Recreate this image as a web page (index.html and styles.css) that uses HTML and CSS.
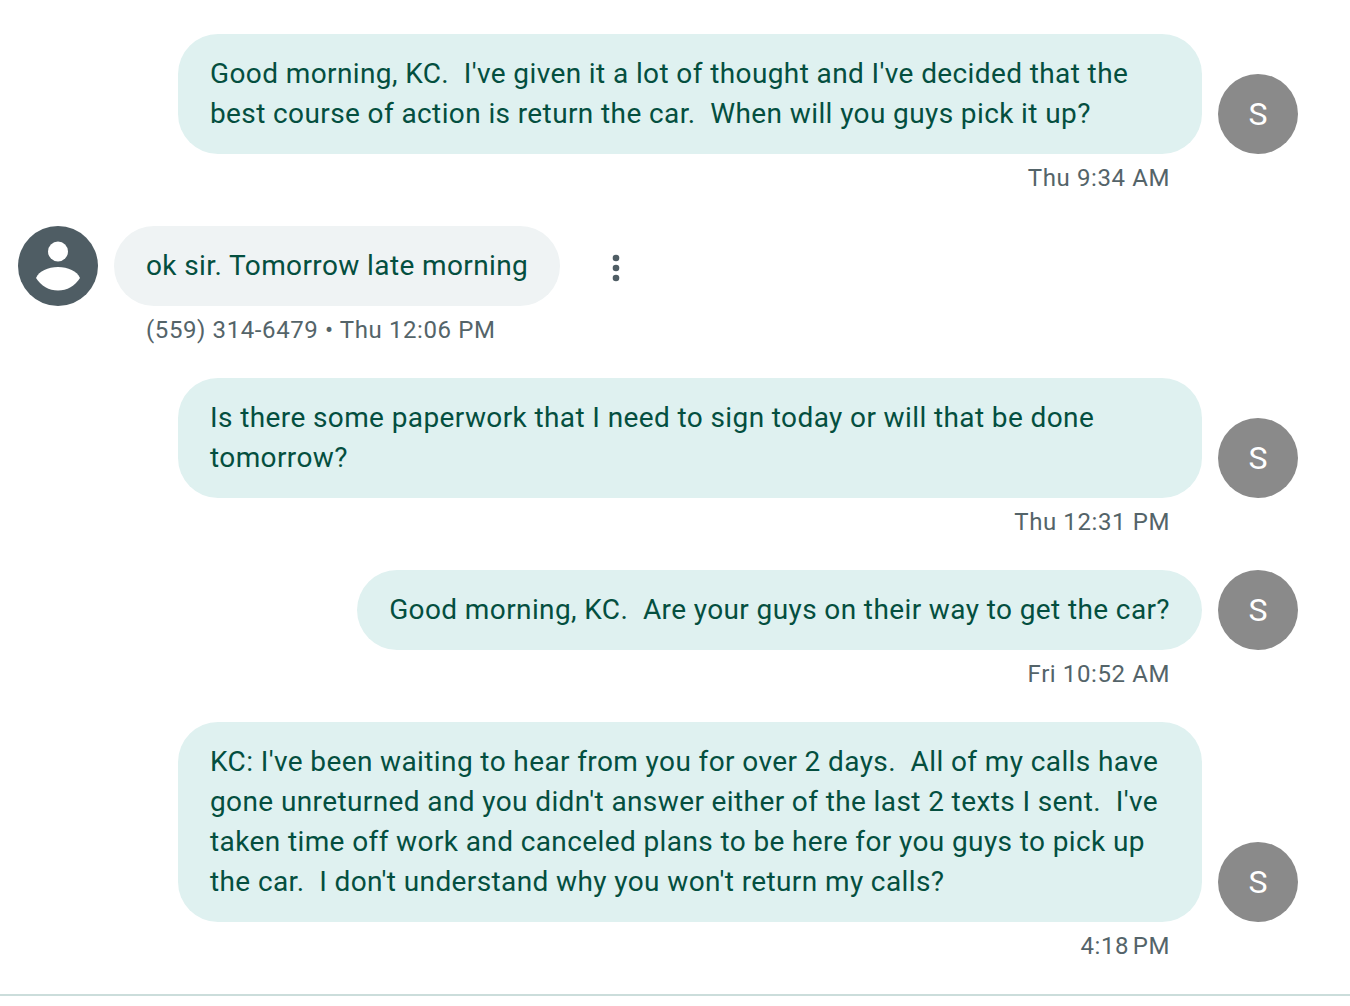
FILE: index.html
```html
<!DOCTYPE html>
<html lang="en">
<head>
    <meta charset="UTF-8">
    <meta name="viewport" content="width=device-width, initial-scale=1.0">
    <title>Messages</title>
    <link rel="stylesheet" href="styles.css">
</head>
<body>
    <main class="thread">
        <div class="message outgoing">
            <div class="row">
                <div class="bubble">Good morning, KC.  I've given it a lot of thought and I've decided that the best course of action is return the car.  When will you guys pick it up?</div>
                <div class="avatar">S</div>
            </div>
            <div class="meta">Thu 9:34 AM</div>
        </div>

        <div class="message incoming">
            <div class="row">
                <div class="avatar contact">
                    <svg viewBox="0 0 80 80" width="80" height="80">
                        <circle cx="40" cy="25.5" r="10"/>
                        <path d="M18 52C21 45 30 41 40 41s19 4 22 11C57 60 49 64.5 40 64.5S23 60 18 52z"/>
                    </svg>
                </div>
                <div class="bubble">ok sir. Tomorrow late morning</div>
                <button class="more" aria-label="More options">
                    <svg viewBox="0 0 8 28" width="8" height="28">
                        <circle cx="4" cy="4" r="3.3"/>
                        <circle cx="4" cy="14" r="3.3"/>
                        <circle cx="4" cy="24" r="3.3"/>
                    </svg>
                </button>
            </div>
            <div class="meta">(559) 314-6479 • Thu 12:06 PM</div>
        </div>

        <div class="message outgoing">
            <div class="row">
                <div class="bubble">Is there some paperwork that I need to sign today or will that be done tomorrow?</div>
                <div class="avatar">S</div>
            </div>
            <div class="meta">Thu 12:31 PM</div>
        </div>

        <div class="message outgoing">
            <div class="row">
                <div class="bubble">Good morning, KC.  Are your guys on their way to get the car?</div>
                <div class="avatar">S</div>
            </div>
            <div class="meta">Fri 10:52 AM</div>
        </div>

        <div class="message outgoing">
            <div class="row">
                <div class="bubble">KC: I've been waiting to hear from you for over 2 days.  All of my calls have gone unreturned and you didn't answer either of the last 2 texts I sent.  I've taken time off work and canceled plans to be here for you guys to pick up the car.  I don't understand why you won't return my calls?</div>
                <div class="avatar">S</div>
            </div>
            <div class="meta">4:18&#8239;PM</div>
        </div>
    </main>
</body>
</html>
```
FILE: styles.css
```css
body {
    margin: 0;
    font-family: Roboto, Arial, sans-serif;
    background-color: #fff;
}

.thread {
    box-sizing: border-box;
    height: 996px;
    padding: 34px 52px 0 18px;
    border-bottom: 2px solid #cbdddb;
}

.message {
    margin-bottom: 24px;
}

.row {
    display: flex;
    align-items: flex-end;
    gap: 16px;
}

.outgoing .row {
    justify-content: flex-end;
}

.bubble {
    box-sizing: border-box;
    max-width: 1024px;
    padding: 20px 32px;
    border-radius: 40px;
    font-size: 28px;
    line-height: 40px;
    letter-spacing: 0.39px;
    white-space: pre-wrap;
    color: #044f3f;
    background-color: #dff1f0;
}

.incoming .bubble {
    background-color: #eff3f4;
}

.avatar {
    flex: none;
    width: 80px;
    height: 80px;
    border-radius: 50%;
    font-size: 32px;
    line-height: 80px;
    text-align: center;
    color: #fff;
    background-color: #8a8a8a;
}

.contact {
    background-color: #4f5d64;
}

.contact svg {
    display: block;
    fill: #fff;
}

.more {
    align-self: center;
    margin: 4px 0 0 36px;
    padding: 0;
    border: none;
    background: none;
    cursor: pointer;
}

.more svg {
    display: block;
    fill: #4f5d64;
}

.meta {
    height: 48px;
    font-size: 24px;
    line-height: 48px;
    letter-spacing: 0.6px;
    color: #546469;
}

.outgoing .meta {
    margin-right: 128px;
    text-align: right;
}

.incoming .meta {
    margin-left: 128px;
}
```
